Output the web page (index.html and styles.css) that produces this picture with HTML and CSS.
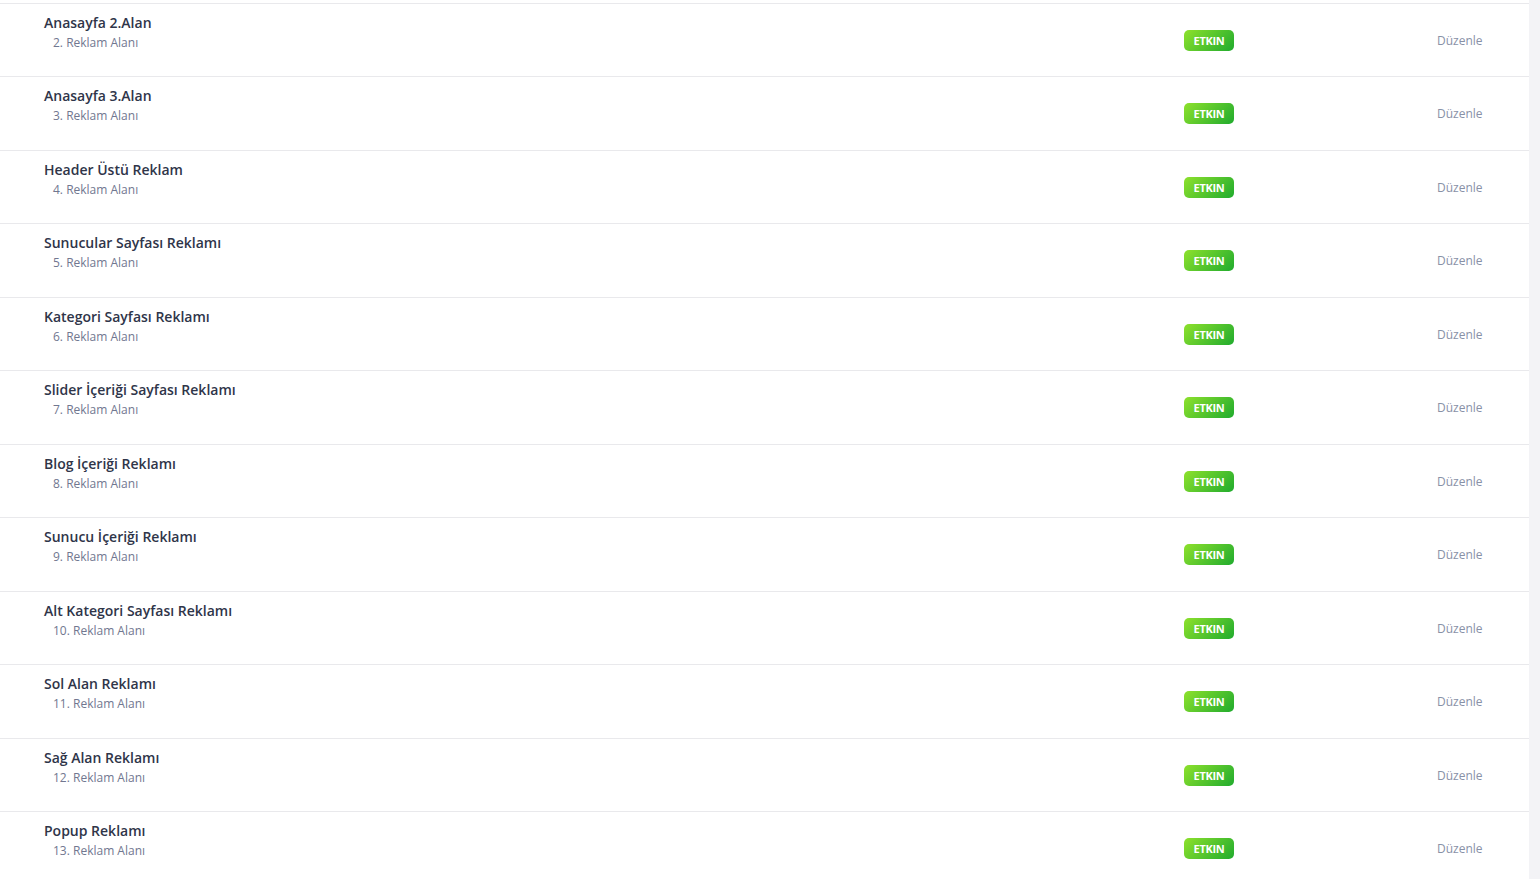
FILE: index.html
```html
<!DOCTYPE html>
<html lang="tr">
<head>
    <meta charset="UTF-8">
    <meta name="viewport" content="width=device-width, initial-scale=1.0">
    <title>Reklam Alanları</title>
    <link rel="stylesheet" href="styles.css">
</head>
<body>
    <div class="page">
        <div class="panel">
            <div class="row">
                <div class="cell-name">
                    <div class="ad-title">Anasayfa 2.Alan</div>
                    <div class="ad-sub">2. Reklam Alanı</div>
                </div>
                <div class="cell-status"><span class="badge">ETKIN</span></div>
                <div class="cell-action"><a href="#" class="edit">Düzenle</a></div>
            </div>
            <div class="row">
                <div class="cell-name">
                    <div class="ad-title">Anasayfa 3.Alan</div>
                    <div class="ad-sub">3. Reklam Alanı</div>
                </div>
                <div class="cell-status"><span class="badge">ETKIN</span></div>
                <div class="cell-action"><a href="#" class="edit">Düzenle</a></div>
            </div>
            <div class="row">
                <div class="cell-name">
                    <div class="ad-title">Header Üstü Reklam</div>
                    <div class="ad-sub">4. Reklam Alanı</div>
                </div>
                <div class="cell-status"><span class="badge">ETKIN</span></div>
                <div class="cell-action"><a href="#" class="edit">Düzenle</a></div>
            </div>
            <div class="row">
                <div class="cell-name">
                    <div class="ad-title">Sunucular Sayfası Reklamı</div>
                    <div class="ad-sub">5. Reklam Alanı</div>
                </div>
                <div class="cell-status"><span class="badge">ETKIN</span></div>
                <div class="cell-action"><a href="#" class="edit">Düzenle</a></div>
            </div>
            <div class="row">
                <div class="cell-name">
                    <div class="ad-title">Kategori Sayfası Reklamı</div>
                    <div class="ad-sub">6. Reklam Alanı</div>
                </div>
                <div class="cell-status"><span class="badge">ETKIN</span></div>
                <div class="cell-action"><a href="#" class="edit">Düzenle</a></div>
            </div>
            <div class="row">
                <div class="cell-name">
                    <div class="ad-title">Slider İçeriği Sayfası Reklamı</div>
                    <div class="ad-sub">7. Reklam Alanı</div>
                </div>
                <div class="cell-status"><span class="badge">ETKIN</span></div>
                <div class="cell-action"><a href="#" class="edit">Düzenle</a></div>
            </div>
            <div class="row">
                <div class="cell-name">
                    <div class="ad-title">Blog İçeriği Reklamı</div>
                    <div class="ad-sub">8. Reklam Alanı</div>
                </div>
                <div class="cell-status"><span class="badge">ETKIN</span></div>
                <div class="cell-action"><a href="#" class="edit">Düzenle</a></div>
            </div>
            <div class="row">
                <div class="cell-name">
                    <div class="ad-title">Sunucu İçeriği Reklamı</div>
                    <div class="ad-sub">9. Reklam Alanı</div>
                </div>
                <div class="cell-status"><span class="badge">ETKIN</span></div>
                <div class="cell-action"><a href="#" class="edit">Düzenle</a></div>
            </div>
            <div class="row">
                <div class="cell-name">
                    <div class="ad-title">Alt Kategori Sayfası Reklamı</div>
                    <div class="ad-sub">10. Reklam Alanı</div>
                </div>
                <div class="cell-status"><span class="badge">ETKIN</span></div>
                <div class="cell-action"><a href="#" class="edit">Düzenle</a></div>
            </div>
            <div class="row">
                <div class="cell-name">
                    <div class="ad-title">Sol Alan Reklamı</div>
                    <div class="ad-sub">11. Reklam Alanı</div>
                </div>
                <div class="cell-status"><span class="badge">ETKIN</span></div>
                <div class="cell-action"><a href="#" class="edit">Düzenle</a></div>
            </div>
            <div class="row">
                <div class="cell-name">
                    <div class="ad-title">Sağ Alan Reklamı</div>
                    <div class="ad-sub">12. Reklam Alanı</div>
                </div>
                <div class="cell-status"><span class="badge">ETKIN</span></div>
                <div class="cell-action"><a href="#" class="edit">Düzenle</a></div>
            </div>
            <div class="row">
                <div class="cell-name">
                    <div class="ad-title">Popup Reklamı</div>
                    <div class="ad-sub">13. Reklam Alanı</div>
                </div>
                <div class="cell-status"><span class="badge">ETKIN</span></div>
                <div class="cell-action"><a href="#" class="edit">Düzenle</a></div>
            </div>
        </div>
    </div>
</body>
</html>
```
FILE: styles.css
```css
body {
    font-family: 'Open Sans', 'Noto Sans', sans-serif;
    margin: 0;
    padding: 0;
    background-color: #f3f3f6;
    overflow: hidden;
}

.page {
    display: flex;
    padding-right: 11px;
}

.panel {
    flex: 1;
    background-color: #fff;
    padding-top: 2.5px;
}

.row {
    display: flex;
    height: 73.5px;
    box-sizing: border-box;
    border-top: 1px solid #e9e9ec;
}

.cell-name {
    flex: 1;
    padding: 9px 0 0 44px;
}

.ad-title {
    font-size: 14px;
    line-height: 20px;
    font-weight: 600;
    color: #2f3549;
}

.ad-sub {
    font-size: 12px;
    line-height: 18px;
    color: #717790;
    padding-left: 9px;
    margin-top: 1px;
}

.cell-status {
    width: 200px;
    display: flex;
    align-items: center;
    margin-top: 1px;
}

.badge {
    display: inline-block;
    width: 50px;
    height: 21px;
    line-height: 21px;
    text-align: center;
    border-radius: 5px;
    background: linear-gradient(135deg, #8ee12c, #20ab2e);
    color: #fff;
    font-size: 11px;
    font-weight: 700;
    letter-spacing: -0.3px;
}

.cell-action {
    width: 145px;
    display: flex;
    align-items: center;
    margin-top: 1px;
}

.edit {
    font-size: 12px;
    color: #8891a7;
    text-decoration: none;
    margin-left: 53px;
}
```
